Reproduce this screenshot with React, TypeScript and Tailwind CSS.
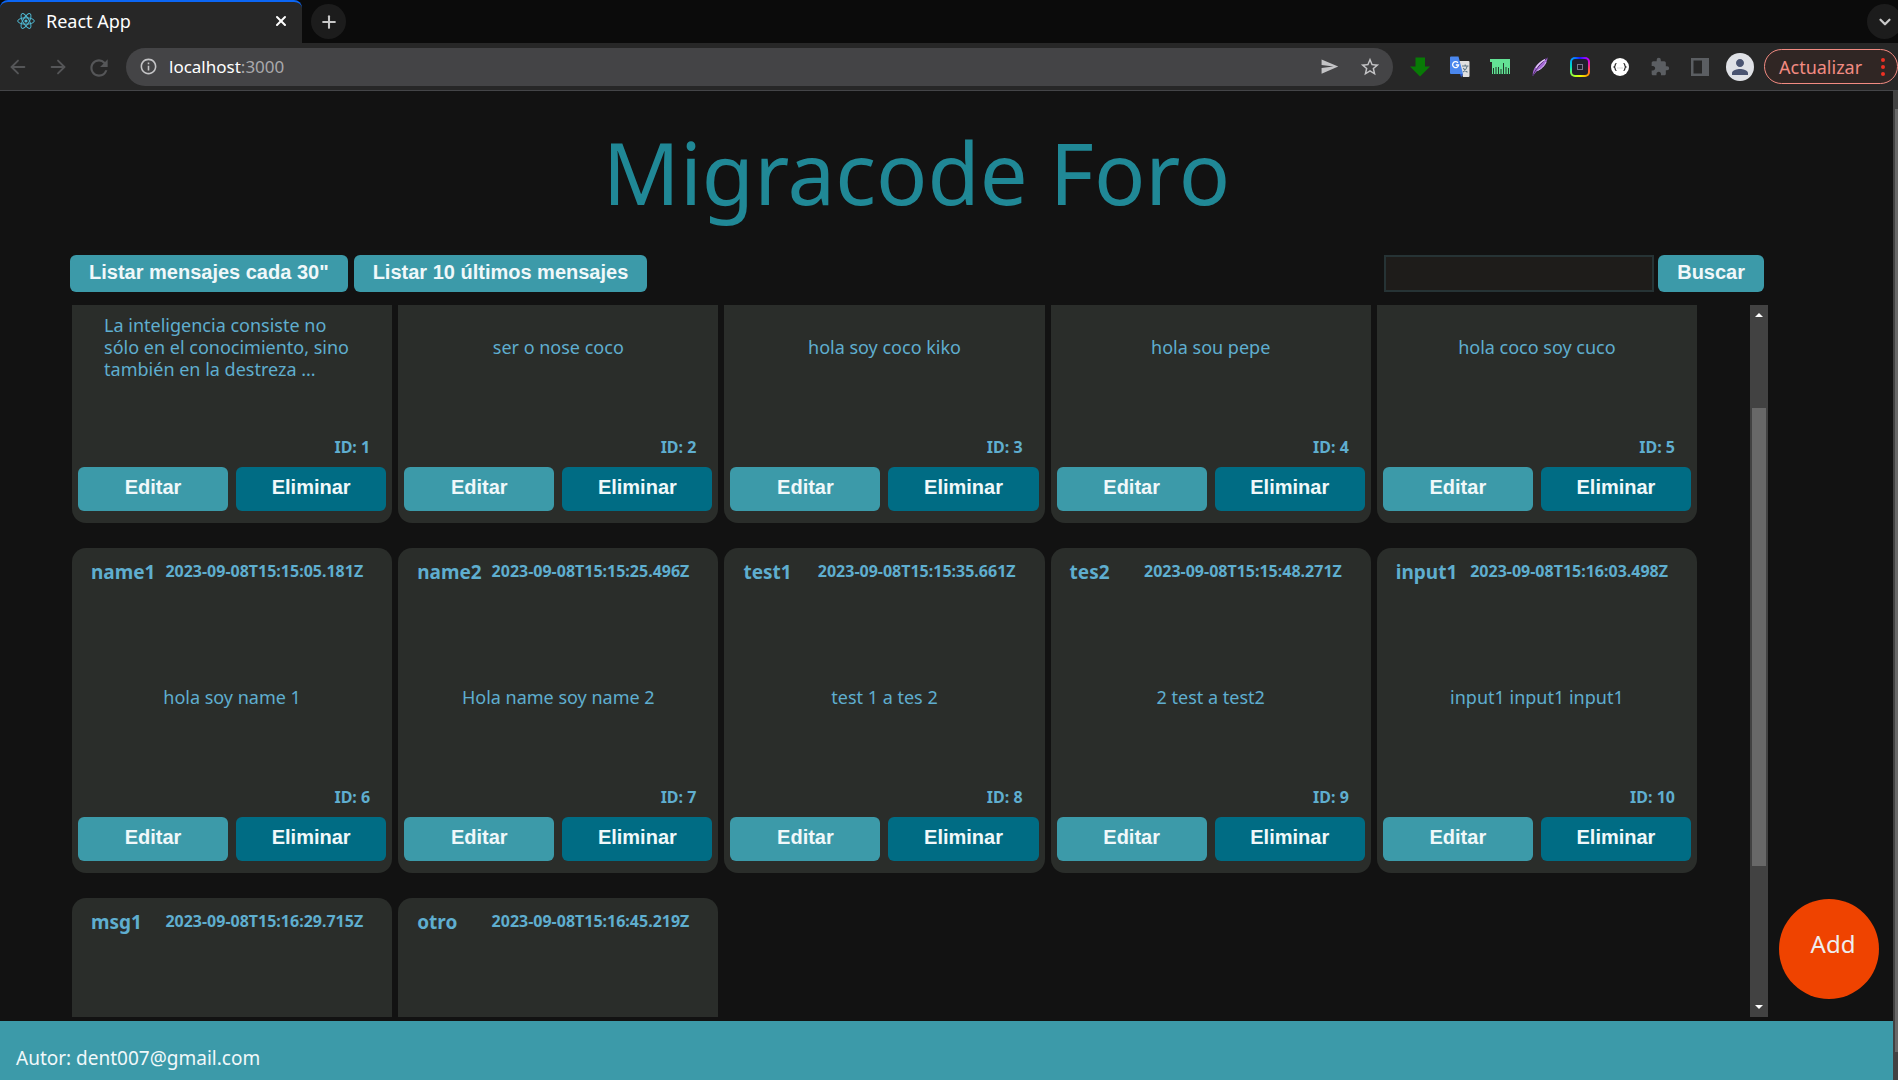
import React from "react";
import { ChevronDown, Plus, X, ArrowLeft, ArrowRight } from "lucide-react";
import { MdRefresh, MdInfoOutline, MdSend, MdExtension, MdPerson, MdStarBorder } from "react-icons/md";

type Message = { id: number; name: string; date: string; text: string };

const messages: Message[] = [
  { id: 1, name: "", date: "", text: "La inteligencia consiste no sólo en el conocimiento, sino también en la destreza ..." },
  { id: 2, name: "", date: "", text: "ser o nose coco" },
  { id: 3, name: "", date: "", text: "hola soy coco kiko" },
  { id: 4, name: "", date: "", text: "hola sou pepe" },
  { id: 5, name: "", date: "", text: "hola coco soy cuco" },
  { id: 6, name: "name1", date: "2023-09-08T15:15:05.181Z", text: "hola soy name 1" },
  { id: 7, name: "name2", date: "2023-09-08T15:15:25.496Z", text: "Hola name soy name 2" },
  { id: 8, name: "test1", date: "2023-09-08T15:15:35.661Z", text: "test 1 a tes 2" },
  { id: 9, name: "tes2", date: "2023-09-08T15:15:48.271Z", text: "2 test a test2" },
  { id: 10, name: "input1", date: "2023-09-08T15:16:03.498Z", text: "input1 input1 input1" },
  { id: 11, name: "msg1", date: "2023-09-08T15:16:29.715Z", text: "" },
  { id: 12, name: "otro", date: "2023-09-08T15:16:45.219Z", text: "" },
];

function ReactLogo() {
  return (
    <svg viewBox="0 0 18 18" className="h-[18px] w-[18px] shrink-0" fill="none" stroke="#4fb9d3" strokeWidth="1">
      <ellipse cx="9" cy="9" rx="8.3" ry="3.2" />
      <ellipse cx="9" cy="9" rx="8.3" ry="3.2" transform="rotate(60 9 9)" />
      <ellipse cx="9" cy="9" rx="8.3" ry="3.2" transform="rotate(120 9 9)" />
      <circle cx="9" cy="9" r="1.6" fill="#4fb9d3" stroke="none" />
    </svg>
  );
}

function DownloadArrow() {
  return (
    <svg viewBox="0 0 20 20" className="h-5 w-5">
      <path d="M5.500 0.500h9.500v9h5L10 19.500 0 9.500h5.500z" fill="#087a06" />
    </svg>
  );
}

function TranslateIcon() {
  return (
    <svg viewBox="0 0 20 22" className="h-[22px] w-5">
      <path d="M9 5h9.500a1 1 0 0 1 1 1v14a1 1 0 0 1-1 1H13z" fill="#e0e0e0" />
      <path d="M12 10h6.500M15.200 8.500V10M17.300 10c-.5 2.500-2.200 4.500-4.300 6M13.300 12c.8 1.800 2.300 3.300 4.200 4.200" stroke="#607988" strokeWidth="1.100" fill="none" />
      <path d="M1 .5h7.500L13 18H1a1 1 0 0 1-1-1V1.500a1 1 0 0 1 1-1z" fill="#4a87ee" />
      <path d="M10 18h3l-1.800 3.500z" fill="#2a56c6" />
      <path d="M8 6.800A3 3 0 1 0 8.600 9H5.800" stroke="#fff" strokeWidth="1.300" fill="none" />
    </svg>
  );
}

function BarsIcon() {
  return (
    <svg viewBox="0 0 20 16" className="h-4 w-5">
      <path d="M0 0h20v15H2V3H0z" fill="#63e295" />
      <path d="M3.500 9v7M6 8v8M8.500 8v8M11 10v6M13.500 4v12M16 8v8M18.500 9v7" stroke="#1f3a2a" strokeWidth="1" />
    </svg>
  );
}

function FeatherIcon() {
  return (
    <svg viewBox="0 0 16 20" className="h-5 w-4">
      <path d="M.8 19C.2 12 5 5.500 15.500.8c-.3 5-3.700 10.500-11 13.700z" fill="#a468d4" />
      <path d="M.8 19C3 13 8 7 15.500.8" stroke="#4d2e6b" strokeWidth="1" fill="none" />
      <path d="M4 11c2-3.500 5-6.300 9-8.300" stroke="#e3cdf6" strokeWidth="1.300" fill="none" />
      <path d="M5.500 13.500c4-1.700 7-4.700 8.500-8.500" stroke="#d9bdf2" strokeWidth="1" fill="none" />
    </svg>
  );
}

function RainbowIcon() {
  return (
    <span className="grid h-5 w-5 place-items-center rounded-[5px] bg-[conic-gradient(#1a1aff,#c800ff,#ff3070,#ff9a00,#e8ff00,#90ff40,#00e0c0,#00a0ff,#1a1aff)]">
      <span className="grid h-4 w-4 place-items-center rounded-[3px] bg-[#201f2b]">
        <span className="h-1.5 w-1.5 border border-[#77778a]" />
      </span>
    </span>
  );
}

function JsonIcon() {
  return (
    <svg viewBox="0 0 18 18" className="h-[18px] w-[18px]">
      <circle cx="9" cy="9" r="9" fill="#fff" />
      <path d="M5.500 5.500c-1.200 0-1.300.5-1.300 1.500S4 8.600 3.100 9c.9.400 1.100 1 1.100 2s.1 1.500 1.300 1.500M12.500 5.500c1.200 0 1.300.5 1.300 1.500s.2 1.600 1.100 2c-.9.400-1.100 1-1.100 2s-.1 1.500-1.300 1.500" stroke="#222" strokeWidth="1.200" fill="none" />
      <path d="M6.600 10h.8M8.600 10h.8M10.600 10h.8" stroke="#888" strokeWidth=".8" />
    </svg>
  );
}

function PanelIcon() {
  return (
    <svg viewBox="0 0 18 18" className="h-[18px] w-[18px]">
      <path d="M0 0h18v18H0zM2.500 2.500v13H11v-13z" fill="#5b5e62" fillRule="evenodd" />
    </svg>
  );
}

const chromeButton = "grid shrink-0 place-items-center";

function Browser() {
  return (
    <div className="shrink-0">
      <div className="flex h-[43px] items-start justify-between overflow-hidden bg-[#0b0b0b]">
        <div className="flex items-start">
          <div className="flex h-[43px] w-[302px] items-center rounded-t-lg border-t-2 border-[#0b66f5] bg-[#272727] pr-[13px] pb-1 pl-[17px]">
            <ReactLogo />
            <span className="ml-[11px] flex-1 text-lg text-white">React App</span>
            <button aria-label="Cerrar pestaña" className={`${chromeButton} h-4 w-4 text-white`}>
              <X size={16} strokeWidth={3} />
            </button>
          </div>
          <button aria-label="Nueva pestaña" className={`${chromeButton} mt-1 ml-[9px] h-[35px] w-[35px] rounded-full bg-[#1c1c1c] text-[#c8c8c8]`}>
            <Plus size={20} strokeWidth={2.5} />
          </button>
        </div>
        <button aria-label="Buscar pestañas" className={`${chromeButton} mt-1 -mr-1 h-[35px] w-[35px] rounded-full bg-[#1c1c1c] text-[#c8c8c8]`}>
          <ChevronDown size={18} strokeWidth={3} />
        </button>
      </div>
      <div className="flex h-12 items-center border-b border-[#444548] bg-[#272727]">
        <div className="flex items-center gap-4 pl-1.5 text-[#555658]">
          <button aria-label="Atrás" className={`${chromeButton} h-6 w-6`}><ArrowLeft size={22} strokeWidth={2} /></button>
          <button aria-label="Adelante" className={`${chromeButton} h-6 w-6`}><ArrowRight size={22} strokeWidth={2} /></button>
          <button aria-label="Recargar" className={`${chromeButton} h-6 w-6`}><MdRefresh size={26} /></button>
        </div>
        <div className="ml-4 flex h-[38px] flex-1 items-center rounded-full bg-[#444446] pr-3 pl-[13px] text-[#c4c4c6]">
          <MdInfoOutline size={19} />
          <span className="ml-[11px] flex-1 text-[17px] text-[#a9a9ab]"><span className="text-white">localhost</span>:3000</span>
          <button aria-label="Enviar" className={chromeButton}><MdSend size={19} /></button>
          <button aria-label="Marcador" className={`${chromeButton} ml-5`}><MdStarBorder size={22} /></button>
        </div>
        <div className="flex items-center gap-5 pl-[17px]">
          <button aria-label="Descargas" className={`${chromeButton} w-5`}><DownloadArrow /></button>
          <button aria-label="Traducir" className={`${chromeButton} w-5`}><TranslateIcon /></button>
          <button aria-label="Barras" className={`${chromeButton} w-5`}><BarsIcon /></button>
          <button aria-label="Pluma" className={`${chromeButton} w-5`}><FeatherIcon /></button>
          <button aria-label="Color" className={`${chromeButton} w-5`}><RainbowIcon /></button>
          <button aria-label="JSON" className={`${chromeButton} w-5`}><JsonIcon /></button>
          <button aria-label="Extensiones" className={`${chromeButton} w-5 text-[#5b5e62]`}><MdExtension size={20} /></button>
          <button aria-label="Panel lateral" className={`${chromeButton} w-5`}><PanelIcon /></button>
        </div>
        <button aria-label="Perfil" className={`${chromeButton} ml-4 h-7 w-7 rounded-full bg-[#dfe1e6] text-[#4a5471]`}>
          <MdPerson size={24} />
        </button>
        <button className="ml-2.5 flex h-[35px] w-[134px] items-center justify-between rounded-full border border-[#f28b82] bg-[#302624] pr-3 pl-3.5 text-lg text-[#f28b82]">
          Actualizar
          <span className="flex flex-col gap-[3px]">
            <span className="h-1 w-1 rounded-full bg-[#ee3124]" />
            <span className="h-1 w-1 rounded-full bg-[#ee3124]" />
            <span className="h-1 w-1 rounded-full bg-[#ee3124]" />
          </span>
        </button>
      </div>
    </div>
  );
}

function Card({ message }: { message: Message }) {
  return (
    <article className="flex h-[325px] flex-col rounded-[14px] bg-[#2a2d2a] px-1.5 pb-3 text-[#5faecf]">
      <header className="flex h-12 items-center justify-between pr-[23px] pl-[13px] font-bold whitespace-nowrap">
        <h2 className="text-[19px]">{message.name}</h2>
        <time className="pb-0.5 text-base">{message.date}</time>
      </header>
      <p className="mx-auto flex max-w-[256px] flex-1 items-center pt-3 text-lg leading-[22px]">{message.text}</p>
      <p className="pr-4 pb-2 text-right text-base leading-6 font-bold">ID: {message.id}</p>
      <div className="grid grid-cols-2 gap-2">
        <button className="h-11 rounded-md bg-[#3c9aa9] pb-1 font-['Liberation_Sans',sans-serif] text-xl font-bold text-[#f0f8fa]">Editar</button>
        <button className="h-11 rounded-md bg-[#006c84] pb-1 font-['Liberation_Sans',sans-serif] text-xl font-bold text-[#f0f8fa]">Eliminar</button>
      </div>
    </article>
  );
}

const barButton =
  "h-[37px] rounded-md bg-[#3c9aa9] px-[19px] pb-1 font-['Liberation_Sans',sans-serif] text-xl font-bold whitespace-nowrap text-[#f0f8fa]";

export default function App() {
  return (
    <div className="flex h-screen flex-col overflow-hidden bg-[#121212] font-['Noto_Sans','Open_Sans',sans-serif]">
      <Browser />
      <div className="flex min-h-0 flex-1">
        <div className="relative flex min-w-0 flex-1 flex-col">
          <h1 className="h-[164px] pt-[23px] pr-[60px] text-center text-[85px] leading-[116px] text-[#208896]">Migracode Foro</h1>
          <div className="flex justify-between pr-[129px] pl-[70px]">
            <div className="flex gap-1.5">
              <button className={barButton}>Listar mensajes cada 30"</button>
              <button className={barButton}>Listar 10 últimos mensajes</button>
            </div>
            <form className="flex gap-1">
              <input aria-label="Buscar mensajes" type="text" className="h-[37px] w-[270px] border-2 border-[#263335] bg-[#1e1c1a] px-2 text-white" />
              <button type="button" className={barButton}>Buscar</button>
            </form>
          </div>
          <div className="mt-[13px] mr-[125px] ml-[72px] flex min-h-0 flex-1 justify-between">
            <main className="mr-[53px] min-w-0 flex-1 overflow-hidden">
              <div className="-mt-[107px] grid grid-cols-5 gap-x-1.5 gap-y-[25px]">
                {messages.map((m) => (
                  <Card key={m.id} message={m} />
                ))}
              </div>
            </main>
            <div className="flex w-[18px] flex-col items-center justify-between bg-[#424242] py-2">
              <span className="border-x-4 border-b-4 border-x-transparent border-b-white" />
              <span className="mt-[91px] mb-auto h-[458px] w-[14px] bg-[#686868]" />
              <span className="border-x-4 border-t-4 border-x-transparent border-t-white" />
            </div>
          </div>
          <footer className="mt-1 h-[59px] shrink-0 bg-[#3c9aa9] px-4 pt-[23px] text-[19px] leading-7 text-[#f0f8fa]">Autor: dent007@gmail.com</footer>
          <button className="absolute right-3.5 bottom-[81px] h-[100px] w-[100px] rounded-full bg-[#ef4300] pb-2.5 pl-2 text-2xl text-[#eeeeee]">Add</button>
        </div>
        <div className="w-[5px] bg-[#424242] pt-[18px] pl-0.5">
          <div className="h-[943px] bg-[#686868]" />
        </div>
      </div>
    </div>
  );
}
